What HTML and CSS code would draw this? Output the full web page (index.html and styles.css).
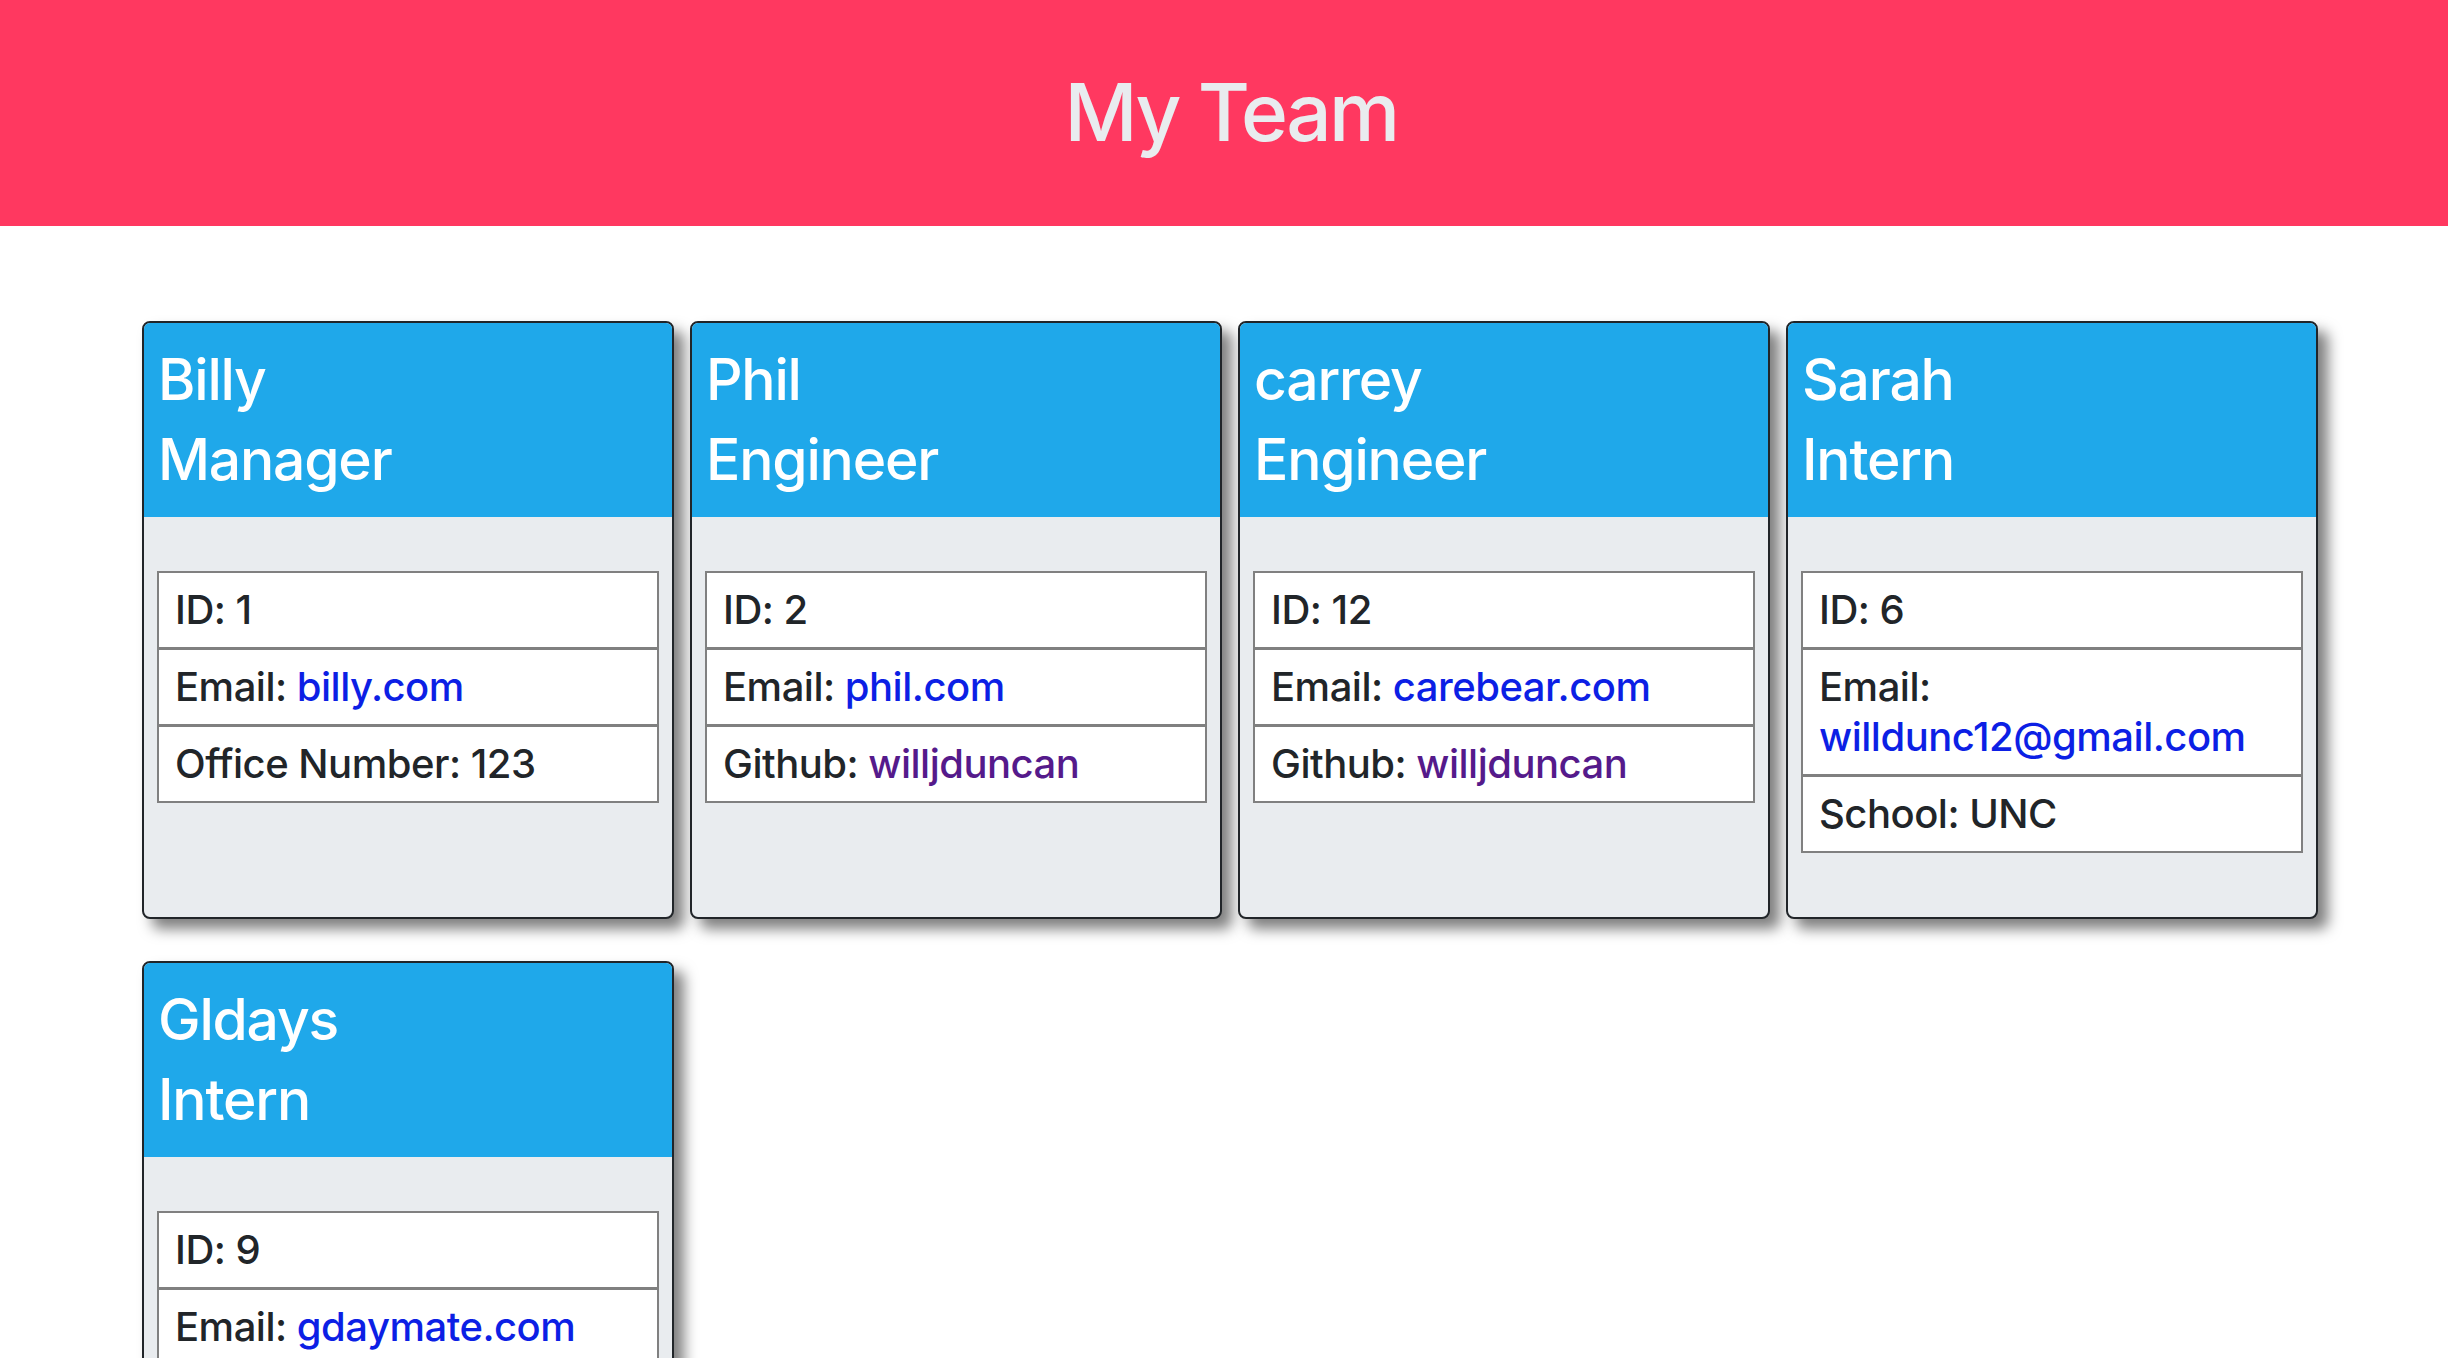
FILE: index.html
```html
<!DOCTYPE html>
<html lang="en">
<head>
<meta charset="utf-8">
<title>My Team</title>
<link rel="stylesheet" href="styles.css">
</head>
<body>
<header class="hero">
  <h1 class="hero-title">My Team</h1>
</header>
<main class="team">
  <div class="card">
    <div class="card-head">
      <h2 class="card-name">Billy</h2>
      <h3 class="card-role">Manager</h3>
    </div>
    <div class="card-body">
      <ul class="info">
        <li class="info-item">ID: 1</li>
        <li class="info-item">Email: <a class="mail" href="#">billy.com</a></li>
        <li class="info-item">Office Number: 123</li>
      </ul>
    </div>
  </div>
  <div class="card">
    <div class="card-head">
      <h2 class="card-name">Phil</h2>
      <h3 class="card-role">Engineer</h3>
    </div>
    <div class="card-body">
      <ul class="info">
        <li class="info-item">ID: 2</li>
        <li class="info-item">Email: <a class="mail" href="#">phil.com</a></li>
        <li class="info-item">Github: <a class="gh" href="#">willjduncan</a></li>
      </ul>
    </div>
  </div>
  <div class="card">
    <div class="card-head">
      <h2 class="card-name">carrey</h2>
      <h3 class="card-role">Engineer</h3>
    </div>
    <div class="card-body">
      <ul class="info">
        <li class="info-item">ID: 12</li>
        <li class="info-item">Email: <a class="mail" href="#">carebear.com</a></li>
        <li class="info-item">Github: <a class="gh" href="#">willjduncan</a></li>
      </ul>
    </div>
  </div>
  <div class="card">
    <div class="card-head">
      <h2 class="card-name">Sarah</h2>
      <h3 class="card-role">Intern</h3>
    </div>
    <div class="card-body">
      <ul class="info">
        <li class="info-item">ID: 6</li>
        <li class="info-item">Email: <a class="mail" href="#">willdunc12@gmail.com</a></li>
        <li class="info-item">School: UNC</li>
      </ul>
    </div>
  </div>
  <div class="card">
    <div class="card-head">
      <h2 class="card-name">Gldays</h2>
      <h3 class="card-role">Intern</h3>
    </div>
    <div class="card-body">
      <ul class="info">
        <li class="info-item">ID: 9</li>
        <li class="info-item">Email: <a class="mail" href="#">gdaymate.com</a></li>
        <li class="info-item">School: UNC</li>
      </ul>
    </div>
  </div>
</main>
</body>
</html>
```
FILE: styles.css
```css
* {
  box-sizing: border-box;
}

body {
  margin: 0;
  font-family: Inter, "Noto Sans", sans-serif;
  color: #212529;
  background: #ffffff;
}

.hero {
  background: #ff3860;
  height: 226px;
  padding-top: 63px;
  text-align: center;
}

.hero-title {
  margin: 0;
  font-size: 80px;
  line-height: 97px;
  font-weight: 500;
  letter-spacing: -2.6px;
  color: #e9ecef;
  padding-left: 14px;
}

.team {
  display: grid;
  grid-template-columns: repeat(4, 532px);
  column-gap: 16px;
  row-gap: 42px;
  padding: 95px 0 40px 142px;
}

.card {
  border: 2px solid #212529;
  border-radius: 8px;
  background: #e9ecef;
  overflow: hidden;
  box-shadow: 10px 10px 14px rgba(0, 0, 0, 0.5);
}

.card-head {
  background: #1fa8ea;
  color: #ffffff;
  padding: 17px 14px;
}

.card-name,
.card-role {
  margin: 0;
  font-size: 57px;
  line-height: 80px;
  font-weight: 500;
  letter-spacing: -1.2px;
}

.card-body {
  padding: 54px 13px 64px;
}

.info {
  list-style: none;
  margin: 0;
  padding: 0;
}

.info-item {
  background: #ffffff;
  border: 2px solid #808080;
  padding: 12px 16px;
  font-size: 40px;
  line-height: 50px;
  font-weight: 500;
  letter-spacing: -0.5px;
}

.info-item + .info-item {
  border-top: 3px solid #808080;
  margin-top: -2px;
}

.mail {
  color: #0c1fe5;
  text-decoration: none;
}

.gh {
  color: #551a8b;
  text-decoration: none;
}
```
